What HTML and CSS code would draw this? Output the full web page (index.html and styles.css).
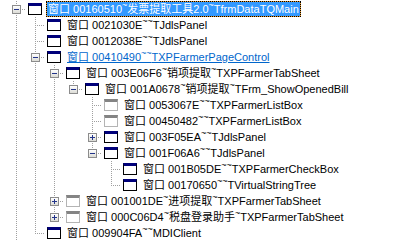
FILE: index.html
```html
<!DOCTYPE html>
<html>
<head>
<meta charset="utf-8">
<link rel="stylesheet" href="styles.css">
</head>
<body>
<div class="tree">
  <div class="row"><span class="c tee"><span class="box minus"></span></span><span class="ico"></span><span class="lbl sel"><span class="in">窗口 00160510<span class="tl">~</span>发票提取工具2.0<span class="tl">~</span>TfrmDataTQMain</span></span></div>
  <div class="row"><span class="c pipe"></span><span class="c tee"></span><span class="ico"></span><span class="lbl">窗口 0021030E<span class="tl">~~</span>TJdlsPanel</span></div>
  <div class="row"><span class="c pipe"></span><span class="c tee"></span><span class="ico"></span><span class="lbl">窗口 0012038E<span class="tl">~~</span>TJdlsPanel</span></div>
  <div class="row"><span class="c pipe"></span><span class="c tee"><span class="box minus"></span></span><span class="ico"></span><span class="lbl hot">窗口 00410490<span class="tl">~~</span>TXPFarmerPageControl</span></div>
  <div class="row"><span class="c pipe"></span><span class="c pipe"></span><span class="c tee"><span class="box minus"></span></span><span class="ico"></span><span class="lbl">窗口 003E06F6<span class="tl">~</span>销项提取<span class="tl">~</span>TXPFarmerTabSheet</span></div>
  <div class="row"><span class="c pipe"></span><span class="c pipe"></span><span class="c pipe"></span><span class="c elbow"><span class="box minus"></span></span><span class="ico"></span><span class="lbl">窗口 001A0678<span class="tl">~</span>销项提取<span class="tl">~</span>TFrm_ShowOpenedBill</span></div>
  <div class="row"><span class="c pipe"></span><span class="c pipe"></span><span class="c pipe"></span><span class="c"></span><span class="c tee"></span><span class="ico g"></span><span class="lbl">窗口 0053067E<span class="tl">~~</span>TXPFarmerListBox</span></div>
  <div class="row"><span class="c pipe"></span><span class="c pipe"></span><span class="c pipe"></span><span class="c"></span><span class="c tee"></span><span class="ico g"></span><span class="lbl">窗口 00450482<span class="tl">~~</span>TXPFarmerListBox</span></div>
  <div class="row"><span class="c pipe"></span><span class="c pipe"></span><span class="c pipe"></span><span class="c"></span><span class="c tee"><span class="box plus"></span></span><span class="ico"></span><span class="lbl">窗口 003F05EA<span class="tl">~~</span>TJdlsPanel</span></div>
  <div class="row"><span class="c pipe"></span><span class="c pipe"></span><span class="c pipe"></span><span class="c"></span><span class="c elbow"><span class="box minus"></span></span><span class="ico"></span><span class="lbl">窗口 001F06A6<span class="tl">~~</span>TJdlsPanel</span></div>
  <div class="row"><span class="c pipe"></span><span class="c pipe"></span><span class="c pipe"></span><span class="c"></span><span class="c"></span><span class="c tee"></span><span class="ico"></span><span class="lbl">窗口 001B05DE<span class="tl">~~</span>TXPFarmerCheckBox</span></div>
  <div class="row"><span class="c pipe"></span><span class="c pipe"></span><span class="c pipe"></span><span class="c"></span><span class="c"></span><span class="c elbow"></span><span class="ico"></span><span class="lbl">窗口 00170650<span class="tl">~~</span>TVirtualStringTree</span></div>
  <div class="row"><span class="c pipe"></span><span class="c pipe"></span><span class="c tee"><span class="box plus"></span></span><span class="ico g"></span><span class="lbl">窗口 001001DE<span class="tl">~</span>进项提取<span class="tl">~</span>TXPFarmerTabSheet</span></div>
  <div class="row"><span class="c pipe"></span><span class="c pipe"></span><span class="c elbow"><span class="box plus"></span></span><span class="ico g"></span><span class="lbl">窗口 000C06D4<span class="tl">~</span>税盘登录助手<span class="tl">~</span>TXPFarmerTabSheet</span></div>
  <div class="row"><span class="c pipe"></span><span class="c elbow"></span><span class="ico"></span><span class="lbl">窗口 009904FA<span class="tl">~~</span>MDIClient</span></div>
</div>
</body>
</html>
```

FILE: styles.css
```css
html, body {
  margin: 0;
  background: #fff;
}
.tree {
  padding: 1px 0 0 7px;
  font-family: "Liberation Sans", "Noto Sans CJK SC", sans-serif;
  font-size: 11px;
  color: #000;
}
.row {
  display: flex;
  align-items: flex-start;
  height: 16px;
  white-space: nowrap;
}
.c {
  flex: 0 0 19px;
  height: 16px;
}
.pipe {
  background: repeating-linear-gradient(to bottom, #a0a0a0 0 1px, transparent 1px 2px) 9px 0 / 1px 16px no-repeat;
}
.tee {
  background:
    repeating-linear-gradient(to bottom, #a0a0a0 0 1px, transparent 1px 2px) 9px 0 / 1px 16px no-repeat,
    repeating-linear-gradient(to right, #a0a0a0 0 1px, transparent 1px 2px) 9px 8px / 10px 1px no-repeat;
}
.elbow {
  background:
    repeating-linear-gradient(to bottom, #a0a0a0 0 1px, transparent 1px 2px) 9px 0 / 1px 9px no-repeat,
    repeating-linear-gradient(to right, #a0a0a0 0 1px, transparent 1px 2px) 9px 8px / 10px 1px no-repeat;
}
.box {
  display: block;
  width: 7px;
  height: 7px;
  margin: 4px 0 0 5px;
  border: 1px solid #8c8c8c;
}
.box.minus {
  background:
    linear-gradient(#23348a, #23348a) 1px 3px / 5px 1px no-repeat,
    linear-gradient(#ffffff, #dcdcd6);
}
.box.plus {
  background:
    linear-gradient(#23348a, #23348a) 1px 3px / 5px 1px no-repeat,
    linear-gradient(#23348a, #23348a) 3px 1px / 1px 5px no-repeat,
    linear-gradient(#ffffff, #dcdcd6);
}
.ico {
  flex: 0 0 auto;
  width: 12px;
  height: 8px;
  margin: 2px 0 0 2px;
  border: 1px solid #000;
  border-top: 3px solid #00007a;
  background: #fff;
}
.ico.g {
  border-color: #b4b4b4;
  border-top-color: #848484;
}
.lbl {
  margin-left: 4px;
  padding: 0 2px;
  height: 16px;
  line-height: 16px;
}
.lbl.sel {
  padding: 0;
  height: 14px;
  line-height: 14px;
  border: 1px dotted #000;
  background: #e89a2c;
}
.sel .in {
  display: block;
  height: 14px;
  padding: 0 1px;
  background: #3399ff;
  color: #fff;
}
.lbl.hot {
  color: #0066cc;
  text-decoration: underline;
}
.tl {
  font-size: 9px;
  line-height: 0;
  vertical-align: 5px;
}
```
